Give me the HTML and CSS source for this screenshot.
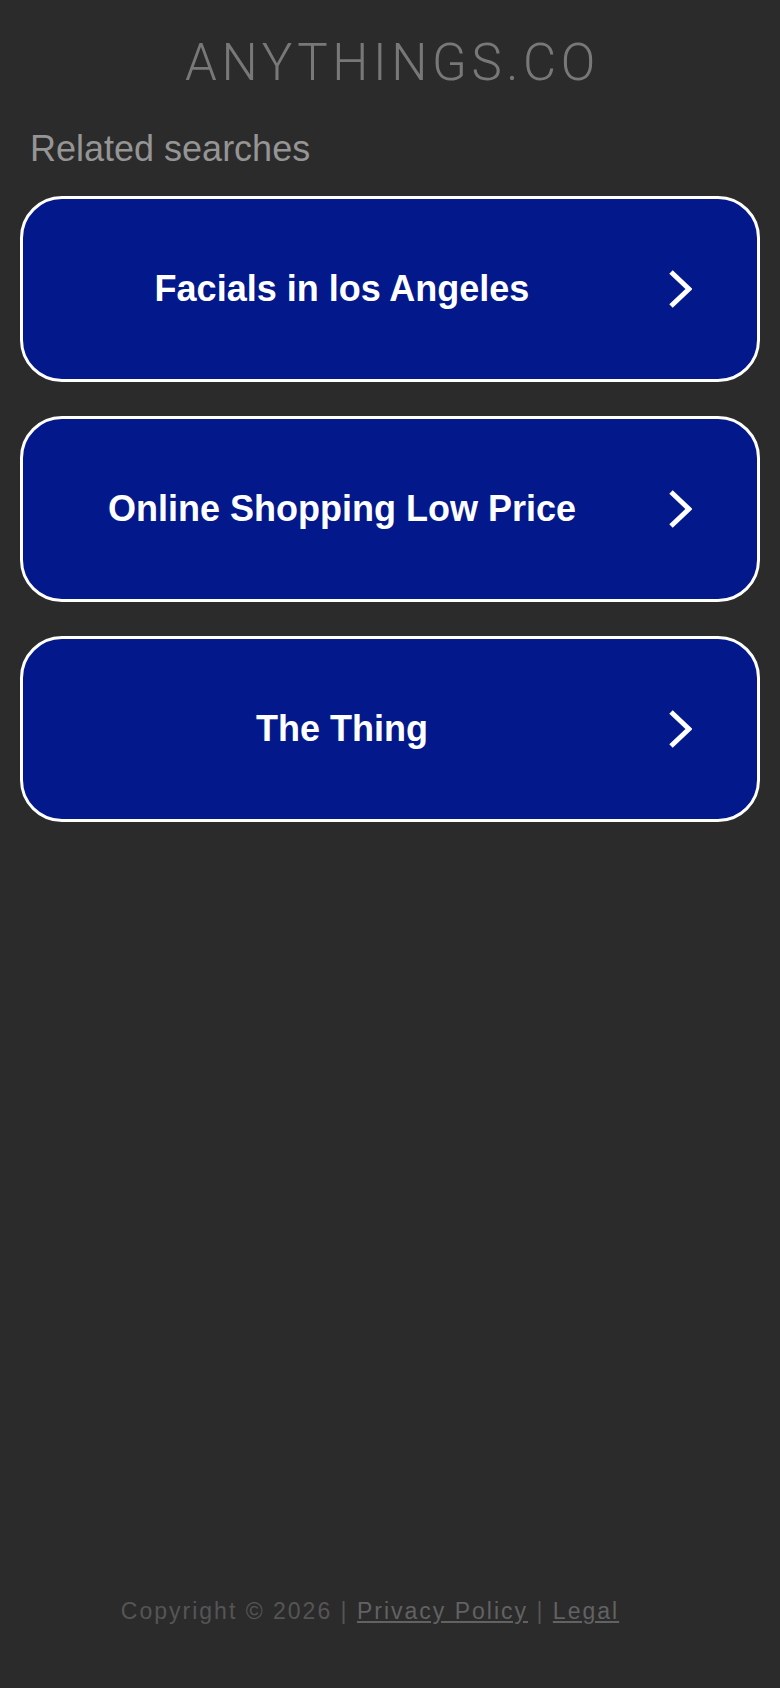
FILE: index.html
```html
<!DOCTYPE html>
<html lang="en">
<head>
    <meta charset="UTF-8">
    <meta name="viewport" content="width=device-width, initial-scale=1.0">
    <title>anythings.co</title>
    <link rel="stylesheet" href="styles.css">
</head>
<body>
    <div class="header">
        <h1 class="domain">ANYTHINGS.CO</h1>
    </div>

    <div class="related">
        <h2>Related searches</h2>

        <div class="link-list">
            <a class="link-box" href="#">
                <span class="link-text">Facials in los Angeles</span>
                <svg class="arrow" viewBox="0 0 24 40"><polyline points="3,3 21,20 3,37"/></svg>
            </a>
            <a class="link-box" href="#">
                <span class="link-text">Online Shopping Low Price</span>
                <svg class="arrow" viewBox="0 0 24 40"><polyline points="3,3 21,20 3,37"/></svg>
            </a>
            <a class="link-box" href="#">
                <span class="link-text">The Thing</span>
                <svg class="arrow" viewBox="0 0 24 40"><polyline points="3,3 21,20 3,37"/></svg>
            </a>
        </div>
    </div>

    <div class="footer">
        Copyright &copy; 2026 | <a href="#">Privacy Policy</a> | <a href="#">Legal</a>
    </div>
</body>
</html>
```

FILE: styles.css
```css
body {
    display: flex;
    flex-direction: column;
    min-height: 1688px;
    margin: 0;
    padding: 0 20px;
    box-sizing: border-box;
    background-color: #2b2b2b;
    font-family: "Liberation Sans", Arial, sans-serif;
}

.header {
    padding-top: 38px;
    padding-left: 5px;
    text-align: center;
}

.domain {
    margin: 0;
    font-family: Roboto, "Liberation Sans", sans-serif;
    font-weight: 300;
    font-size: 51px;
    line-height: 50px;
    letter-spacing: 4.6px;
    color: #787878;
}

.related h2 {
    margin: 41px 0 0 0;
    padding-left: 10px;
    font-size: 36px;
    font-weight: normal;
    line-height: 40px;
    color: #959595;
}

.link-list {
    display: flex;
    flex-direction: column;
    gap: 34px;
    margin-top: 27px;
}

.link-box {
    display: flex;
    align-items: center;
    height: 186px;
    box-sizing: border-box;
    border: 3px solid #ffffff;
    border-radius: 42px;
    background-color: #03188b;
    color: #ffffff;
    text-decoration: none;
}

.link-text {
    flex: 1;
    text-align: center;
    font-size: 36px;
    font-weight: bold;
}

.arrow {
    width: 24px;
    height: 40px;
    margin: 0 65px 0 7px;
    fill: none;
    stroke: #ffffff;
    stroke-width: 5;
}

.footer {
    margin-top: auto;
    padding: 0 40px 62px 0;
    text-align: center;
    font-size: 23px;
    line-height: 30px;
    letter-spacing: 2px;
    color: #555555;
}

.footer a {
    color: #626262;
}
```
